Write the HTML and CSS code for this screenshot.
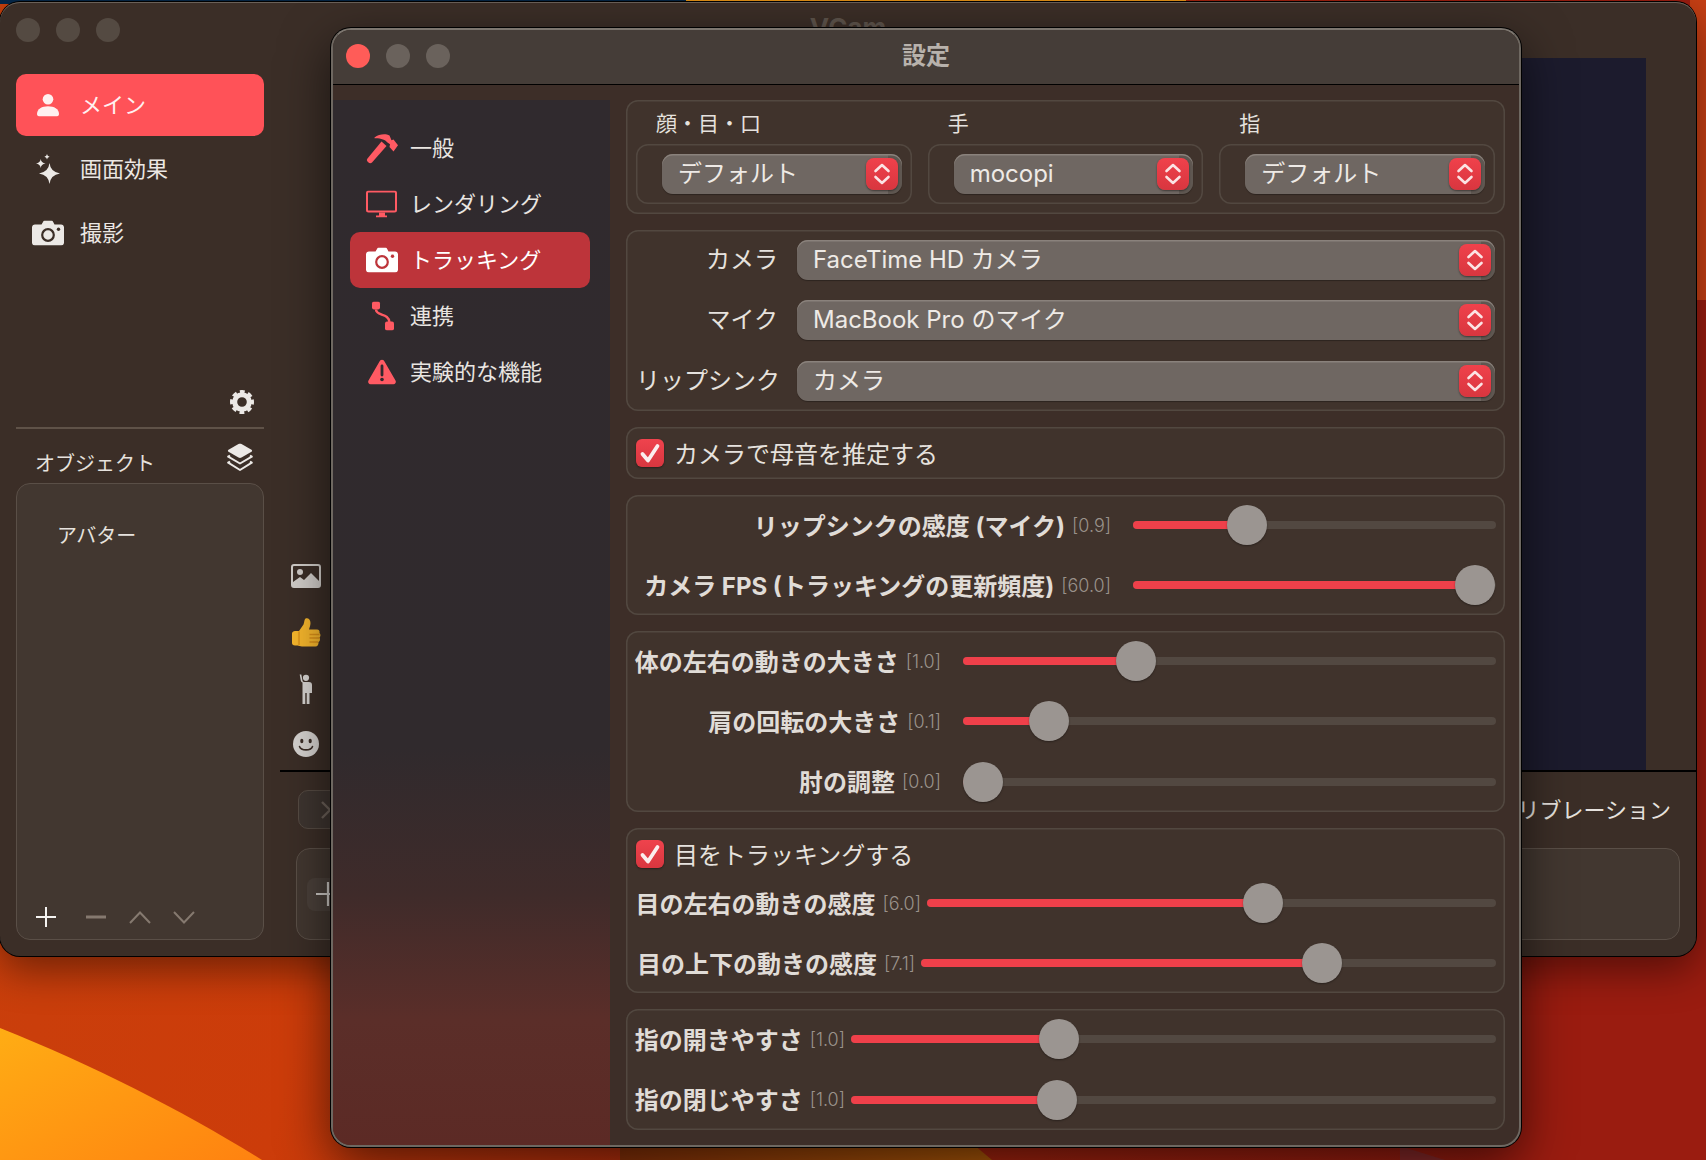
FILE: index.html
```html
<!DOCTYPE html>
<html lang="ja">
<head>
<meta charset="utf-8">
<title>設定</title>
<link rel="stylesheet" href="styles.css">
</head>
<body>
<svg class="sprites" width="0" height="0" aria-hidden="true">
  <symbol id="stepper" viewBox="0 0 32 32"><path d="M9.5 13L16 7l6.5 6M9.5 19l6.5 6 6.5-6" fill="none" stroke="#fbe3e4" stroke-width="2.6" stroke-linecap="round" stroke-linejoin="round"/></symbol>
  <symbol id="check" viewBox="0 0 28 28"><path d="M6.5 15l5.5 6.5L21.5 7" fill="none" stroke="#fbeeee" stroke-width="3.8" stroke-linecap="round" stroke-linejoin="round"/></symbol>
</svg>

<svg class="wallpaper" viewBox="0 0 1706 1160" aria-hidden="true">
  <defs>
    <linearGradient id="wp" x1="0" y1="0" x2="1" y2="0.15">
      <stop offset="0" stop-color="#c8400c"/>
      <stop offset=".3" stop-color="#cc3c0a"/>
      <stop offset=".7" stop-color="#a8240f"/>
      <stop offset="1" stop-color="#9a1c10"/>
    </linearGradient>
    <linearGradient id="dune" x1="0" y1="0" x2="1" y2="1">
      <stop offset="0" stop-color="#ffad14"/>
      <stop offset="1" stop-color="#ff8210"/>
    </linearGradient>
    <linearGradient id="dune2" x1="0" y1="0" x2="1" y2="0">
      <stop offset="0" stop-color="#8a3208"/>
      <stop offset="1" stop-color="#b05a08"/>
    </linearGradient>
  </defs>
  <rect width="1706" height="1160" fill="url(#wp)"/>
  <rect width="686" height="4" fill="#06284a"/>
  <rect x="686" width="500" height="4" fill="#f09a18"/>
  <rect x="1690" width="16" height="300" fill="#c73f14"/>
  <path d="M0 1028C95 1066 185 1112 262 1160H0Z" fill="url(#dune)"/>
  <path d="M620 1160V1140H968L992 1160Z" fill="url(#dune2)"/>
  <path d="M1400 1146L1445 1160H1400Z" fill="#8a2a2a"/>
</svg>

<section class="window main-window">
  <div class="main-title">VCam</div>
  <aside class="main-side">
    <div class="lights lights-main"><i></i><i></i><i></i></div>
    <nav class="main-nav">
      <a class="main-item is-on">
        <svg class="mi-icon" width="22" height="23" viewBox="0 0 22 23"><circle cx="11" cy="5.8" r="5.3" fill="#fff0f0"/><path d="M0 20.5C0 15.5 5 12.8 11 12.8S22 15.5 22 20.5C22 22 21 23 19.5 23H2.5C1 23 0 22 0 20.5Z" fill="#fff0f0"/></svg>
        <span>メイン</span>
      </a>
      <a class="main-item">
        <svg class="mi-icon" width="24" height="30" viewBox="0 0 24 30" fill="#ece9e6"><path d="M13.5 9Q14.5 18 24 19.4 14.5 20.8 13.5 30 12.5 20.8 3 19.4 12.5 18 13.5 9Z"/><path d="M4.7 5Q5.2 8.8 9.5 9.4 5.2 10 4.7 14 4.2 10 0 9.4 4.2 8.8 4.7 5Z"/><path d="M11 0Q11.2 2.2 13.6 2.7 11.2 3.2 11 5.4 10.8 3.2 8.4 2.7 10.8 2.2 11 0Z"/></svg>
        <span>画面効果</span>
      </a>
      <a class="main-item">
        <svg class="mi-icon" width="32" height="25" viewBox="0 0 32 25"><path d="M3 4H9.5L11 1.4C11.5.5 12.2 0 13.2 0H19C20 0 20.7.5 21.2 1.4L22.5 4H29C30.7 4 32 5.3 32 7V22C32 23.7 30.7 25 29 25H3C1.3 25 0 23.7 0 22V7C0 5.3 1.3 4 3 4Z" fill="#ece9e6"/><circle cx="16" cy="14.5" r="5.8" fill="none" stroke="#3b2e27" stroke-width="2.2"/><circle cx="26.5" cy="8.8" r="1.7" fill="#3b2e27"/></svg>
        <span>撮影</span>
      </a>
    </nav>
    <div class="gear-row">
      <svg width="24" height="24" viewBox="0 0 24 24"><circle cx="12" cy="12" r="7.3" fill="none" stroke="#ece9e6" stroke-width="5"/><circle cx="12" cy="12" r="10" fill="none" stroke="#ece9e6" stroke-width="4" stroke-dasharray="4.5 3.354" transform="rotate(-13 12 12)"/></svg>
    </div>
    <div class="side-rule"></div>
    <div class="obj-head">
      <span>オブジェクト</span>
      <svg width="26" height="29" viewBox="0 0 26 29"><path d="M11.5 1L1.5 6.8C.7 7.3.7 8.2 1.5 8.7L11.5 14.5C12.5 15 13.5 15 14.5 14.5L24.5 8.7C25.3 8.2 25.3 7.3 24.5 6.8L14.5 1C13.5.5 12.5.5 11.5 1Z" fill="#ece9e6"/><path d="M3 12.5L1.2 13.7L13 20.5L24.8 13.7L23 12.5M3 18.5L1.2 19.7L13 27L24.8 19.7L23 18.5" fill="none" stroke="#ece9e6" stroke-width="2" stroke-linejoin="round"/></svg>
    </div>
    <div class="obj-panel">
      <div class="obj-row">アバター</div>
      <div class="obj-tools">
        <svg class="tool tool-add" width="22" height="22" viewBox="0 0 22 22"><path d="M11 1V21M1 11H21" stroke="#f4f2f0" stroke-width="2"/></svg>
        <svg class="tool" width="22" height="22" viewBox="0 0 22 22"><path d="M1 11H21" stroke="#85796f" stroke-width="3"/></svg>
        <svg class="tool" width="22" height="22" viewBox="0 0 22 22"><path d="M1 17L11 6.5L21 17" fill="none" stroke="#85796f" stroke-width="2"/></svg>
        <svg class="tool" width="22" height="22" viewBox="0 0 22 22"><path d="M1 6L11 16.5L21 6" fill="none" stroke="#85796f" stroke-width="2"/></svg>
      </div>
    </div>
  </aside>

  <div class="main-body">
    <div class="stage">
      <div class="strip">
        <div class="strip-item si-pic">
          <svg width="30" height="24" viewBox="0 0 30 24"><rect x="1" y="1" width="28" height="22" rx="2" fill="none" stroke="#d0ccc8" stroke-width="2"/><circle cx="9" cy="8" r="3" fill="#d0ccc8"/><path d="M2 22V18L9 13L13 16L20 9L28 17V22Z" fill="#d0ccc8"/></svg>
        </div>
        <div class="strip-item si-thumb">
          <svg width="30" height="32" viewBox="0 0 30 32"><path d="M1 16.5C1 15 2.5 14 4 14H8L12.5 7.5C13.5 5 13 3 14.5 1.5C17 .5 19.5 2.5 19.5 6C19.5 8.5 18.5 10.5 18 12.5H26C28 12.5 29 14 28.5 16C29.8 17 29.8 19.5 28.5 20.5C29.5 22 29 24.5 27.5 25C27.8 27.5 26.5 29.5 24.5 29.5H11C9 29.5 8 28.5 6.5 28.5H4C2 28.5 1 27.5 1 26Z" fill="#f6b62c"/><path d="M18.5 17.5H28.5M18.5 21H28.5M18.5 25H27M8 14.5V28" fill="none" stroke="#d98f18" stroke-width="1.4"/></svg>
        </div>
        <div class="strip-item si-person">
          <svg width="16" height="30" viewBox="0 0 16 30" fill="#d6d3d0"><circle cx="8" cy="3.8" r="3.1"/><path d="M1.7.5L2.8 6.5C3 7.5 3.6 8.2 4.5 8.5V30H7.3V19H8.7V30H11.5V19H14V11C14 9 13 8 11 8H6C5 8 4.6 7 4.4 6L3.3.5Z"/></svg>
        </div>
        <div class="strip-item si-face">
          <svg width="26" height="26" viewBox="0 0 26 26"><circle cx="13" cy="13" r="13" fill="#d6d3d0"/><ellipse cx="8.8" cy="10" rx="1.6" ry="2.2" fill="#3b2e27"/><ellipse cx="17.2" cy="10" rx="1.6" ry="2.2" fill="#3b2e27"/><path d="M6.5 15.5C8 20 18 20 19.5 15.5" fill="none" stroke="#3b2e27" stroke-width="1.6" stroke-linecap="round"/></svg>
        </div>
      </div>
      <div class="video"></div>
    </div>
    <div class="bottom">
      <div class="bottom-top">
        <div class="tab-box">
          <svg width="12" height="18" viewBox="0 0 12 18"><path d="M2 1L10 9L2 17" fill="none" stroke="#6d625a" stroke-width="2.4"/></svg>
        </div>
        <span class="calib">キャリブレーション</span>
      </div>
      <div class="bottom-box">
        <div class="add-btn"><svg width="28" height="24" viewBox="0 0 28 24"><path d="M14 0V24M2 12H26" stroke="#cfcbc7" stroke-width="2.2"/></svg></div>
      </div>
    </div>
  </div>
</section>

<section class="window settings">
  <header class="titlebar">
    <div class="lights lights-set"><i class="red"></i><i></i><i></i></div>
    <h1>設定</h1>
    <div></div>
  </header>
  <div class="set-body">
    <aside class="set-side">
      <a class="set-item">
        <svg class="si" width="32" height="32" viewBox="0 0 32 32" fill="#ff5a63"><path d="M8.5 5.5C13 2 19.5 1.5 23.5 3.5L25.5 8.2L27.5 7.6L32 13.3L27.5 19.5L23.5 15L24 12.3L21.5 10.5C19.5 8 14.5 6 8.5 6.3Z"/><path d="M15.5 9.5L20.5 14L6 30.5C5 31.5 3.5 31.5 2.5 30.5L1.5 29.5C.7 28.5.7 27.5 1.5 26.5Z"/></svg>
        <span>一般</span>
      </a>
      <a class="set-item">
        <svg class="si" width="32" height="27" viewBox="0 0 32 27"><rect x="1" y="1" width="29" height="20" rx="1.5" fill="none" stroke="#ff5a63" stroke-width="2"/><path d="M13 22H19V25H21V27H10V25H13Z" fill="#ff5a63"/></svg>
        <span>レンダリング</span>
      </a>
      <a class="set-item is-on">
        <svg class="si" width="32" height="25" viewBox="0 0 32 25"><path d="M3 4H9.5L11 1.4C11.5.5 12.2 0 13.2 0H19C20 0 20.7.5 21.2 1.4L22.5 4H29C30.7 4 32 5.3 32 7V22C32 23.7 30.7 25 29 25H3C1.3 25 0 23.7 0 22V7C0 5.3 1.3 4 3 4Z" fill="#fff"/><circle cx="16" cy="14.5" r="5.8" fill="none" stroke="#bd343a" stroke-width="2.2"/><circle cx="26.5" cy="8.8" r="1.7" fill="#bd343a"/></svg>
        <span>トラッキング</span>
      </a>
      <a class="set-item">
        <svg class="si" width="24" height="29" viewBox="0 0 24 29"><rect x="2" y="0" width="8" height="8" rx="2" fill="#ff5a63"/><rect x="15" y="20" width="9" height="9" rx="2" fill="#ff5a63"/><path d="M6 8C6 15 19 11 19.5 21" fill="none" stroke="#ff5a63" stroke-width="2.4"/></svg>
        <span>連携</span>
      </a>
      <a class="set-item">
        <svg class="si" width="28" height="25" viewBox="0 0 28 25"><path d="M11.8 1.5C12.8-.3 15.2-.3 16.2 1.5L27.5 21C28.5 22.8 27.3 25 25.2 25H2.8C.7 25 -.5 22.8 .5 21Z" fill="#ff5a63"/><path d="M14 6.5V15.5" stroke="#302a2e" stroke-width="2.8" stroke-linecap="round"/><circle cx="14" cy="20" r="1.8" fill="#302a2e"/></svg>
        <span>実験的な機能</span>
      </a>
    </aside>

    <div class="set-content">
      <div class="panel panel-top">
        <div class="col">
          <div class="col-label">顔・目・口</div>
          <div class="col-box"><div class="select"><span>デフォルト</span><svg class="stepper"><use href="#stepper"/></svg></div></div>
        </div>
        <div class="col">
          <div class="col-label">手</div>
          <div class="col-box"><div class="select"><span>mocopi</span><svg class="stepper"><use href="#stepper"/></svg></div></div>
        </div>
        <div class="col">
          <div class="col-label">指</div>
          <div class="col-box"><div class="select"><span>デフォルト</span><svg class="stepper"><use href="#stepper"/></svg></div></div>
        </div>
      </div>

      <div class="panel panel-form">
        <div class="form-row"><label>カメラ</label><div class="select"><span>FaceTime HD カメラ</span><svg class="stepper"><use href="#stepper"/></svg></div></div>
        <div class="form-row"><label>マイク</label><div class="select"><span>MacBook Pro のマイク</span><svg class="stepper"><use href="#stepper"/></svg></div></div>
        <div class="form-row form-last"><label>リップシンク</label><div class="select"><span>カメラ</span><svg class="stepper"><use href="#stepper"/></svg></div></div>
      </div>

      <div class="panel panel-check">
        <div class="check-row"><svg class="checkbox"><use href="#check"/></svg><span>カメラで母音を推定する</span></div>
      </div>

      <div class="panel">
        <div class="row row-cam"><div class="lab"><b>リップシンクの感度 (マイク)</b><em>[0.9]</em></div><div class="track"><div class="fill" style="width:31.4%"><i class="knob"></i></div></div></div>
        <div class="row row-cam"><div class="lab"><b>カメラ FPS (トラッキングの更新頻度)</b><em>[60.0]</em></div><div class="track"><div class="fill" style="width:94.2%"><i class="knob"></i></div></div></div>
      </div>

      <div class="panel">
        <div class="row row-body"><div class="lab"><b>体の左右の動きの大きさ</b><em>[1.0]</em></div><div class="track"><div class="fill" style="width:32.46%"><i class="knob"></i></div></div></div>
        <div class="row row-body"><div class="lab"><b>肩の回転の大きさ</b><em>[0.1]</em></div><div class="track"><div class="fill" style="width:16.14%"><i class="knob"></i></div></div></div>
        <div class="row row-body row-last"><div class="lab"><b>肘の調整</b><em>[0.0]</em></div><div class="track"><div class="fill" style="width:3.75%"><i class="knob"></i></div></div></div>
      </div>

      <div class="panel">
        <div class="check-row check-eye"><svg class="checkbox"><use href="#check"/></svg><span>目をトラッキングする</span></div>
        <div class="row row-eye-h"><div class="lab"><b>目の左右の動きの感度</b><em>[6.0]</em></div><div class="track"><div class="fill" style="width:59.05%"><i class="knob"></i></div></div></div>
        <div class="row row-eye-v"><div class="lab"><b>目の上下の動きの感度</b><em>[7.1]</em></div><div class="track"><div class="fill" style="width:69.74%"><i class="knob"></i></div></div></div>
      </div>

      <div class="panel">
        <div class="row row-finger"><div class="lab"><b>指の開きやすさ</b><em>[1.0]</em></div><div class="track"><div class="fill" style="width:32.25%"><i class="knob"></i></div></div></div>
        <div class="row row-finger row-last"><div class="lab"><b>指の閉じやすさ</b><em>[1.0]</em></div><div class="track"><div class="fill" style="width:31.94%"><i class="knob"></i></div></div></div>
      </div>
    </div>
  </div>
</section>
</body>
</html>
```
FILE: styles.css
```css
* { box-sizing: border-box; }
html, body { margin: 0; height: 100%; }
body {
  position: relative;
  width: 1706px;
  height: 1160px;
  overflow: hidden;
  background: #a8240f;
  color: #e6e2de;
  font-family: Inter, "Noto Sans CJK JP", sans-serif;
}
.sprites { position: absolute; }
.wallpaper { position: absolute; inset: 0; width: 1706px; height: 1160px; display: block; }

/* windows on the desktop */
.window { position: absolute; }
.main-window {
  left: 0;
  top: 2px;
  width: 1696px;
  height: 954px;
  display: flex;
  background: #3b2e27;
  border-radius: 20px;
  box-shadow: 0 0 0 1px #000, inset 0 1px 0 #6a6058, 0 14px 40px rgba(0, 0, 0, .45);
  overflow: hidden;
}
.main-title {
  position: absolute;
  left: 0;
  right: 0;
  top: 10px;
  text-align: center;
  font-size: 26px;
  font-weight: 700;
  color: #5e544c;
}
.lights { display: flex; gap: 16px; }
.lights i { width: 24px; height: 24px; border-radius: 50%; }
.lights-main i { background: #544a42; }
.lights-set i { background: #6a625c; }
.lights-set .red { background: #ff5c58; }

.main-side {
  width: 280px;
  flex: none;
  display: flex;
  flex-direction: column;
  padding: 16px 16px 16px;
}
.lights-main { margin-bottom: 32px; }
.main-nav { display: flex; flex-direction: column; gap: 2px; }
.main-item {
  height: 62px;
  display: flex;
  align-items: center;
  border-radius: 10px;
  font-size: 22px;
  color: #ebe7e3;
  position: relative;
  padding-left: 64px;
}
.main-item span { padding-bottom: 4px; }
.main-item.is-on { background: #ff5258; color: #fff0f0; }
.mi-icon { position: absolute; left: 32px; top: 50%; transform: translate(-50%, -50%); }
.gear-row { display: flex; justify-content: flex-end; margin-top: 126px; padding-right: 10px; height: 24px; }
.side-rule { height: 2px; background: #5f5248; margin-top: 13px; }
.obj-head {
  height: 54px;
  display: flex;
  align-items: flex-start;
  justify-content: space-between;
  padding: 14px 11px 0 19px;
  font-size: 20px;
  color: #e6e2de;
}
.obj-head span { padding-top: 5px; }
.obj-panel {
  flex: 1;
  display: flex;
  flex-direction: column;
  background: #423730;
  border: 1.5px solid #5a4f47;
  border-radius: 14px;
}
.obj-row { padding: 34px 0 0 40px; font-size: 20px; line-height: 36px; color: #e6e2de; }
.obj-tools { margin-top: auto; display: flex; align-items: center; gap: 22px; padding: 0 0 11px 18px; }
.tool-add { margin-right: 6px; }

.main-body { flex: 1; display: flex; flex-direction: column; min-width: 0; }
.stage { height: 768px; display: flex; padding: 56px 50px 0 0; }
.strip { width: 60px; flex: none; display: flex; flex-direction: column; justify-content: flex-end; padding-right: 8px; }
.strip-item { display: flex; align-items: center; justify-content: center; }
.si-pic { height: 60px; }
.si-thumb { height: 54px; }
.si-person { height: 58px; }
.si-face { height: 52px; }
.video { flex: 1; background: #1c1b2d; }
.bottom { flex: 1; border-top: 2px solid #000; padding: 18px 16px 16px; display: flex; flex-direction: column; }
.bottom-top { height: 39px; display: flex; align-items: center; justify-content: space-between; margin-bottom: 19px; }
.tab-box {
  width: 70px;
  height: 39px;
  margin-left: 2px;
  display: flex;
  align-items: center;
  justify-content: flex-start;
  padding-left: 21px;
  border: 1.5px solid #564b43;
  border-radius: 10px;
  background: #3e3530;
}
.calib { font-size: 22px; color: #e6e2de; margin-right: 9px; padding-bottom: 4px; }
.bottom-box {
  flex: 1;
  display: flex;
  align-items: center;
  padding-left: 10px;
  background: #423730;
  border: 1.5px solid #5a4f47;
  border-radius: 14px;
}
.add-btn { width: 60px; height: 33px; border-radius: 8px; background: #4a403a; display: flex; align-items: center; justify-content: flex-start; padding-left: 7px; }

/* settings window */
.settings {
  left: 331px;
  top: 28px;
  width: 1190px;
  height: 1119px;
  display: flex;
  flex-direction: column;
  background: #3d2e28;
  border: 2px solid #6e6861;
  border-top-color: #7c766f;
  border-radius: 20px;
  box-shadow: 0 0 0 1px #000, 0 16px 50px rgba(0, 0, 0, .6);
  overflow: hidden;
}
.titlebar {
  height: 55px;
  flex: none;
  display: grid;
  grid-template-columns: 1fr auto 1fr;
  align-items: center;
  padding: 0 13px 2px 13px;
  background: #453d38;
  border-bottom: 1.5px solid #000;
}
.titlebar h1 { margin: 0; font-size: 24px; font-weight: 700; color: #b8b2ac; line-height: 1; }
.set-body { flex: 1; display: flex; padding-top: 15px; min-height: 0; }
.set-side {
  width: 277px;
  flex: none;
  display: flex;
  flex-direction: column;
  padding: 20px 20px 0 17px;
  background: linear-gradient(180deg, #302a2e 0%, #302a2d 62%, #3f2b2a 76%, #5b2e29 88%, #5c2a25 100%);
}
.set-item {
  height: 56px;
  position: relative;
  display: flex;
  align-items: center;
  padding-left: 60px;
  border-radius: 10px;
  font-size: 22px;
  color: #e9e5e1;
}
.set-item span { padding-bottom: 4px; }
.set-item.is-on { background: #bd343a; color: #fff; }
.si { position: absolute; left: 32px; top: 50%; transform: translate(-50%, -50%); }
.set-content { flex: 1; display: flex; flex-direction: column; gap: 16px; padding: 0 14px 0 16px; min-width: 0; }

.panel {
  background: #40332c;
  box-shadow: inset 0 0 0 1.5px #524840;
  border-radius: 12px;
  padding: 0 10px;
  flex: none;
}
.panel-top {
  height: 114px;
  display: grid;
  grid-template-columns: repeat(3, 1fr);
  column-gap: 16px;
}
.col { display: flex; flex-direction: column; min-width: 0; }
.col-label { height: 44px; padding: 9px 0 0 20px; font-size: 21px; line-height: 30px; color: #e6e2de; }
.col-box {
  height: 60px;
  display: flex;
  box-shadow: inset 0 0 0 1.5px #524840;
  border-radius: 12px;
  padding: 10px 10px 10px 26px;
}
.select {
  height: 40px;
  flex: 1;
  display: flex;
  align-items: center;
  justify-content: space-between;
  padding: 0 4px 0 16px;
  border-radius: 11px;
  font-size: 24px;
  color: #eeeae6;
  background: linear-gradient(90deg, #6f6762 calc(100% - 14px), #5f5751 calc(100% - 14px));
  box-shadow: inset 0 1.5px 0 #8a827c, 0 1px 1px rgba(0, 0, 0, .3);
}
.select span { line-height: 40px; white-space: nowrap; }
.stepper {
  width: 32px;
  height: 32px;
  flex: none;
  border-radius: 8px;
  background: linear-gradient(180deg, #f0414b, #d8363f);
  box-shadow: 0 1px 2px rgba(0, 0, 0, .45);
}
.panel-form { height: 181px; padding-top: 10px; display: flex; flex-direction: column; gap: 20px; }
.form-row { display: flex; align-items: center; height: 40px; gap: 19px; }
.form-row label { width: 142px; flex: none; text-align: right; font-size: 24px; line-height: 40px; color: #e6e2de; white-space: nowrap; }
.form-last { margin-top: 1px; }
.panel-check { height: 52px; display: flex; align-items: center; }
.check-row { display: flex; align-items: center; gap: 10px; font-size: 24px; color: #e6e2de; }
.check-row span { padding-bottom: 2px; }
.check-eye { height: 45px; padding-top: 7px; }
.checkbox {
  width: 28px;
  height: 28px;
  flex: none;
  border-radius: 6px;
  background: linear-gradient(180deg, #ef434d, #d8363f);
  box-shadow: 0 1px 2px rgba(0, 0, 0, .4);
}
.row { height: 60px; display: flex; align-items: center; }
.row-last { height: 61px; }
.lab {
  flex: none;
  display: flex;
  align-items: center;
  justify-content: flex-end;
  gap: 7px;
  white-space: nowrap;
}
.lab b { font-size: 24px; font-weight: 700; color: #e0dcd7; padding-bottom: 2px; }
.lab em { font-style: normal; font-size: 18px; font-weight: 300; color: #9a928b; }
.row-cam .lab { width: 497px; padding-right: 22px; }
.row-body .lab { width: 327px; padding-right: 22px; }
.row-eye-h .lab { width: 291px; padding-right: 6px; }
.row-eye-v .lab { width: 285px; padding-right: 6px; }
.row-finger .lab { width: 215px; padding-right: 6px; }
.track { flex: 1; height: 8px; margin-right: -1px; border-radius: 4px; background: #524841; }
.fill { position: relative; height: 8px; border-radius: 4px 0 0 4px; background: #ef404a; }
.knob {
  position: absolute;
  right: -20px;
  top: -16px;
  width: 40px;
  height: 40px;
  border-radius: 50%;
  background: #9b9591;
  box-shadow: 0 1px 2px rgba(0, 0, 0, .35);
}
```
